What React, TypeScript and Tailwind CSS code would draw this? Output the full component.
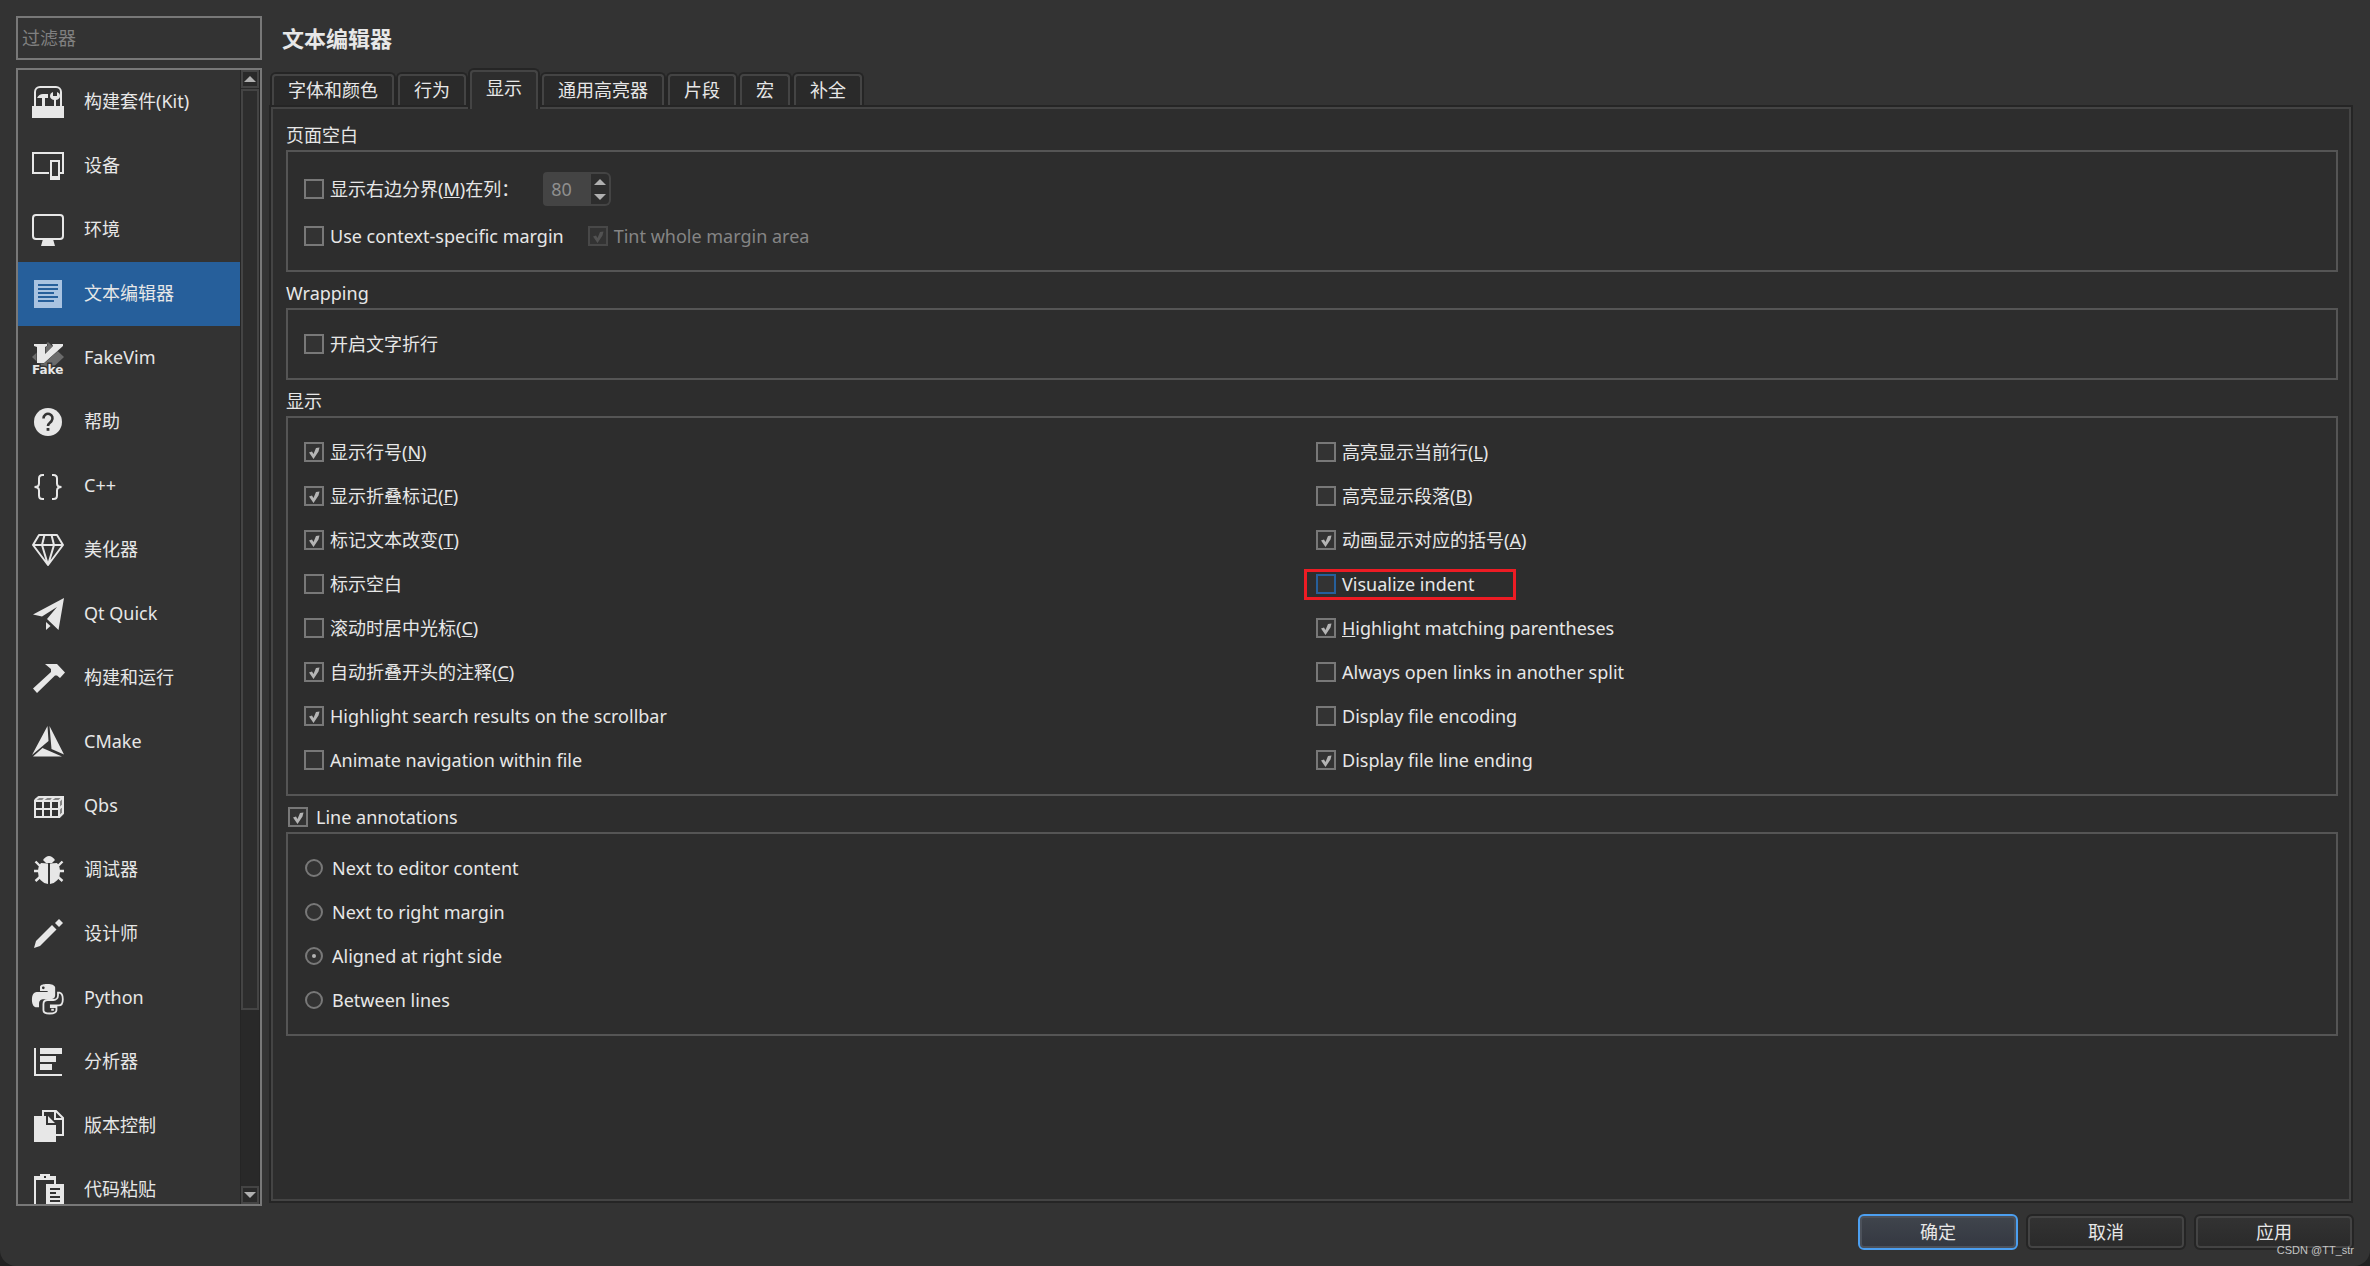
import { useState, type ReactNode } from "react";
import clsx from "clsx";

const Icon = ({ children }: { children: ReactNode }) => (
  <svg viewBox="0 0 32 32" className="size-8 shrink-0 overflow-visible" fill="#e7e7e7" aria-hidden="true">
    {children}
  </svg>
);

const snake =
  "M14.25.18l.9.2.73.26.59.3.45.32.34.34.25.34.16.33.1.3.04.26.02.2-.01.13V8.5l-.05.63-.13.55-.21.46-.26.38-.3.31-.33.25-.35.19-.35.14-.33.1-.3.07-.26.04-.21.02H8.77l-.69.05-.59.14-.5.22-.41.27-.33.32-.27.35-.2.36-.15.37-.1.35-.07.32-.04.27-.02.21v3.06H3.17l-.21-.03-.28-.07-.32-.12-.35-.18-.36-.26-.36-.36-.35-.46-.32-.59-.28-.73-.21-.88-.14-1.05-.05-1.23.06-1.22.16-1.04.24-.87.32-.71.36-.57.4-.44.42-.33.42-.24.4-.16.36-.1.32-.05.24-.01h.16l.06.01h8.16v-.83H6.18l-.01-2.75-.02-.37.05-.34.11-.31.17-.28.25-.26.31-.23.38-.2.44-.18.51-.15.58-.12.64-.1.71-.06.77-.04.84-.02 1.27.05zm-6.3 1.98l-.23.33-.08.41.08.41.23.34.33.22.41.09.41-.09.33-.22.23-.34.08-.41-.08-.41-.23-.33-.33-.22-.41-.09-.41.09z";

const menu = [
  {
    label: "构建套件(Kit)",
    icon: (
      <Icon>
        <path d="M3 20V6a5 5 0 0 1 5-5h16a5 5 0 0 1 5 5v14" fill="none" stroke="#e7e7e7" strokeWidth="2" />
        <path d="M0 20h32v12H0z" />
        <path d="M5 12q2-4 6-4h5v4h-3v9h-3v-9z" />
        <path d="M21 6v4h4V6q3 1 3 4t-4 4v7h-2v-7q-4-1-4-4t3-4z" />
      </Icon>
    ),
  },
  {
    label: "设备",
    icon: (
      <Icon>
        <path d="M17 23H1V3h30v20h-3" fill="none" stroke="#e7e7e7" strokeWidth="2" />
        <path d="M18 10h10v20H18zM20 12v14h6V12z" fillRule="evenodd" />
      </Icon>
    ),
  },
  {
    label: "环境",
    icon: (
      <Icon>
        <rect x="1" y="1" width="30" height="24" rx="3" fill="none" stroke="#e7e7e7" strokeWidth="2" />
        <path d="M11 25h10l2 7H9z" />
      </Icon>
    ),
  },
  {
    label: "文本编辑器",
    icon: (
      <Icon>
        <path d="M2 2h28v28H2z" fill="#a9c3e1" />
        <path d="M6 6h20v2H6zM6 10h20v2H6zM6 14h16v2H6zM6 18h20v2H6zM6 22h16v2H6z" fill="#265f9b" />
      </Icon>
    ),
  },
  {
    label: "FakeVim",
    icon: (
      <Icon>
        <path d="M16 0l16 15-16 15L0 15z" fill="#6b6b6b" />
        <path d="M2 2h13v2l-2 1v7l8-8-1-2h11v2L12 21H5V5L2 4z" stroke="#333" strokeWidth="1" paintOrder="stroke" />
        <text
          x="0"
          y="32"
          fontFamily="DejaVu Sans"
          fontWeight="bold"
          fontSize="12"
          stroke="#333"
          strokeWidth="3"
          paintOrder="stroke"
        >
          Fake
        </text>
      </Icon>
    ),
  },
  {
    label: "帮助",
    icon: (
      <Icon>
        <circle cx="16" cy="16" r="14" />
        <path d="M11.5 12.5a4.5 4.5 0 1 1 8 2.6c-1.3 1.6-3.5 2.2-3.5 4.9" fill="none" stroke="#333" strokeWidth="2.6" />
        <path d="M14.6 22h2.8v2.8h-2.8z" fill="#333" />
      </Icon>
    ),
  },
  {
    label: "C++",
    icon: (
      <Icon>
        <path
          d="M12 5h-1.5Q7 5 7 8.5v5Q7 17 2.5 17 7 17 7 20.5v5Q7 29 10.5 29H12M20 5h1.5Q25 5 25 8.5v5q0 3.5 4.5 3.5-4.5 0-4.5 3.5v5q0 3.5-3.5 3.5H20"
          fill="none"
          stroke="#e7e7e7"
          strokeWidth="2"
        />
      </Icon>
    ),
  },
  {
    label: "美化器",
    icon: (
      <Icon>
        <path
          d="M7 1h18l6 10-15 20L1 11zM1 11h30M12.5 1L10 11l6 20 6-20-2.5-10"
          fill="none"
          stroke="#e7e7e7"
          strokeWidth="2"
          strokeLinejoin="round"
        />
      </Icon>
    ),
  },
  {
    label: "Qt Quick",
    icon: (
      <Icon>
        <path d="M32 0L1 16.5l9 2L25 9 15 21l11.5 11zM14 24l4.5 4L14 32z" />
      </Icon>
    ),
  },
  {
    label: "构建和运行",
    icon: (
      <Icon>
        <path d="M13 2h12l8 8.5-5 5.500-3-2.500h-2L5 31l-4-4.500L19 10V7z" />
      </Icon>
    ),
  },
  {
    label: "CMake",
    icon: (
      <Icon>
        <path d="M15.5 0L0 29l16.5-14zM17.5 0L32 28.5l-12.5-5.5zM1 30.5L10.5 22 30 30.5z" />
      </Icon>
    ),
  },
  {
    label: "Qbs",
    icon: (
      <Icon>
        <path d="M2 10l4-4h26v18l-4 4z" fill="#858585" />
        <path
          d="M3 11h24v16H3zM11 11v16M19 11v16M3 19h24M3 10l4-3h24v16l-4 4M27 11l4-4M11 10l4-3M19 10l4-3M27 19l4-4"
          fill="none"
          stroke="#e7e7e7"
          strokeWidth="2"
        />
        <path d="M4 12h6v6H4zM12 12h6v6h-6zM20 12h6v6h-6zM4 20h6v6H4zM12 20h6v6h-6zM20 20h6v6h-6z" fill="#333" />
      </Icon>
    ),
  },
  {
    label: "调试器",
    icon: (
      <Icon>
        <path d="M11 6q3-4 6-4t6 4l-3 3h-6z" />
        <path d="M16 9.5V30Q6 28 6 18q0-6 3-9zM18 9.5V30q10-2 10-12 0-6-3-9z" />
        <path
          d="M2 17h6M26 17h6M8 12L3.5 7.5M26 12l4.5-4.5M8 23l-4.5 4M26 23l4.5 4"
          stroke="#e7e7e7"
          strokeWidth="2.4"
        />
      </Icon>
    ),
  },
  {
    label: "设计师",
    icon: (
      <Icon>
        <path d="M2 30l2-7L20 7l4.5 4.5L8 28zM27 1l4 4-4 4-4-4z" />
      </Icon>
    ),
  },
  {
    label: "Python",
    icon: (
      <Icon>
        <g transform="translate(0 2) scale(1.3)">
          <path d={snake} />
          <path
            d="M20 6.7h1c2 .4 2.7 2.6 2.7 5 0 2.6-1 4.8-3.2 4.8h-6v1.3h4.3v2.4c0 1.7-2.2 2.5-5.2 2.5s-4.8-1-4.8-2.6v-4.6c0-1.9 1.4-3.2 3.3-3.2h4.4c2 0 3.5-1.5 3.5-3.4zM14.8 19.8h2"
            fill="none"
            stroke="#e7e7e7"
            strokeWidth="1.4"
          />
        </g>
      </Icon>
    ),
  },
  {
    label: "分析器",
    icon: (
      <Icon>
        <path d="M2 2h2v26h26v2H2zM8 2h22v6H8zM8 10h16v6H8zM8 18h12v6H8z" />
      </Icon>
    ),
  },
  {
    label: "版本控制",
    icon: (
      <Icon>
        <path d="M11 6V1h13l7 7v17h-7M23 1v8h8" fill="none" stroke="#e7e7e7" strokeWidth="2" />
        <path d="M2 6h12v9h10v17H2zM16 6l7 7h-7z" />
      </Icon>
    ),
  },
  {
    label: "代码粘贴",
    icon: (
      <Icon>
        <path d="M2 2h6V0h10v2h6v8h-2V6H4v26H2zM12 2v2h2V2z" fillRule="evenodd" />
        <path d="M14 10h18v22H14zM18 14v2h10v-2zM18 18v2h6v-2zM18 22v2h10v-2zM18 26v2h10v-2z" fillRule="evenodd" />
      </Icon>
    ),
  },
];

const tabs = ["字体和颜色", "行为", "显示", "通用高亮器", "片段", "宏", "补全"];

type Option = { label: ReactNode; checked?: boolean; marked?: boolean };

const leftOptions: Option[] = [
  { label: <>显示行号(<u>N</u>)</>, checked: true },
  { label: <>显示折叠标记(<u>F</u>)</>, checked: true },
  { label: <>标记文本改变(<u>T</u>)</>, checked: true },
  { label: "标示空白" },
  { label: <>滚动时居中光标(<u>C</u>)</> },
  { label: <>自动折叠开头的注释(<u>C</u>)</>, checked: true },
  { label: "Highlight search results on the scrollbar", checked: true },
  { label: "Animate navigation within file" },
];

const rightOptions: Option[] = [
  { label: <>高亮显示当前行(<u>L</u>)</> },
  { label: <>高亮显示段落(<u>B</u>)</> },
  { label: <>动画显示对应的括号(<u>A</u>)</>, checked: true },
  { label: "Visualize indent", marked: true },
  { label: <><u>H</u>ighlight matching parentheses</>, checked: true },
  { label: "Always open links in another split" },
  { label: "Display file encoding" },
  { label: "Display file line ending", checked: true },
];

const annotations = ["Next to editor content", "Next to right margin", "Aligned at right side", "Between lines"];

function Check({
  label,
  checked,
  disabled,
  marked,
  gap = "gap-1.5",
}: Option & { disabled?: boolean; gap?: string }) {
  return (
    <label className={clsx("relative flex h-5 w-fit items-center whitespace-nowrap", gap, disabled && "text-[#858585]")}>
      <span className="grid size-5 shrink-0">
        <input
          type="checkbox"
          defaultChecked={checked}
          disabled={disabled}
          className={clsx(
            "peer col-start-1 row-start-1 size-5 appearance-none border-2 bg-[#333]",
            marked ? "border-[#265f9b]" : disabled ? "border-[#484848]" : "border-[#787878]"
          )}
        />
        <svg
          viewBox="0 0 20 20"
          className={clsx(
            "pointer-events-none invisible col-start-1 row-start-1 size-5 peer-checked:visible",
            disabled ? "fill-[#525252]" : "fill-[#b4b4b4]"
          )}
        >
          <path d="M5 10.5l3-1 1.5 2.5L12 6l3.5-.5-1 4-5 7.5z" />
        </svg>
      </span>
      <span>{label}</span>
      {marked && (
        <span className="pointer-events-none absolute -top-[5px] -left-3 h-[31px] w-[212px] border-3 border-[#ed1c24]" />
      )}
    </label>
  );
}

function Group({ title, pad = "py-6", children }: { title: ReactNode; pad?: string; children: ReactNode }) {
  return (
    <section className="mb-[9px]">
      <h2 className="mb-[3px] flex h-6 items-center">{title}</h2>
      <div className={clsx("border-2 border-[#555] px-4", pad)}>{children}</div>
    </section>
  );
}

const Arrow = ({ down }: { down?: boolean }) => (
  <svg viewBox="0 0 12 6" className="h-1.5 w-3" fill="#b0b0b0" aria-hidden="true">
    <path d={down ? "M0 0h12L6 6z" : "M0 6h12L6 0z"} />
  </svg>
);

export default function App() {
  const [page, setPage] = useState("文本编辑器");
  const [tab, setTab] = useState("显示");

  return (
    <div className="h-screen bg-[#222]">
      <div className="flex h-full flex-col rounded-b-2xl bg-[#333] p-4 font-['Noto_Sans','Noto_Sans_CJK_SC',sans-serif] text-[18px] leading-6 text-[#e7e7e7]">
        <div className="mb-2 flex min-h-0 flex-1 gap-2">
          {/* Sidebar */}
          <aside className="flex w-[246px] shrink-0 flex-col gap-2">
            <input
              type="text"
              placeholder="过滤器"
              aria-label="过滤器"
              className="h-11 border-2 border-[#787878] bg-transparent px-1 placeholder:text-[#808080] focus:outline-none"
            />
            <div className="flex min-h-0 flex-1 border-2 border-[#787878]">
              <nav className="min-w-0 flex-1 overflow-y-auto [scrollbar-width:none]">
                {menu.map((item) => (
                  <button
                    key={item.label}
                    onClick={() => setPage(item.label)}
                    className={clsx(
                      "flex h-16 w-full items-center gap-5 pl-3.5 text-left whitespace-nowrap",
                      page === item.label && "bg-[#265f9b]"
                    )}
                  >
                    {item.icon}
                    <span className="pb-0.5">{item.label}</span>
                  </button>
                ))}
              </nav>
              <div className="flex w-5 shrink-0 flex-col border-x border-[#252525] bg-[#292929]">
                <button aria-label="Scroll up" className="flex h-[18px] items-center justify-center border-2 border-[#444]">
                  <Arrow />
                </button>
                <div className="min-h-0 flex-1 py-px">
                  <div className="h-[84%] border-2 border-[#444] bg-[#2d2d2d]" />
                </div>
                <button aria-label="Scroll down" className="flex h-[18px] items-center justify-center border-2 border-[#444]">
                  <Arrow down />
                </button>
              </div>
            </div>
          </aside>

          {/* Content */}
          <main className="flex min-w-0 flex-1 flex-col">
            <h1 className="flex h-11 items-center pl-3 text-[22px] font-bold">文本编辑器</h1>
            <div role="tablist" className="flex h-[47px] items-end">
              {tabs.map((name) => (
                <button
                  key={name}
                  role="tab"
                  aria-selected={tab === name}
                  onClick={() => setTab(name)}
                  className={clsx(
                    "rounded-t-md border-2 border-b-0 border-[#252525]",
                    tab === name ? "z-10 -mb-0.5 h-[41px]" : "mb-0.5 h-[33px]"
                  )}
                >
                  <span
                    className={clsx(
                      "flex h-full justify-center rounded-t-sm border-2 border-b-0 border-[#444] px-3.5",
                      tab === name ? "bg-[#2d2d2d] pt-1" : "bg-[#2a2a2a] pt-0.5"
                    )}
                  >
                    {name}
                  </span>
                </button>
              ))}
            </div>
            <div className="mr-[3px] mb-[5px] ml-px min-h-0 flex-1 overflow-hidden border-2 border-[#444] bg-[#2d2d2d] pt-3.5 pr-[11px] pl-[13px] ring-2 ring-[#252525]">
              <Group title="页面空白" pad="pt-5 pb-6">
                <div className="mb-5 flex h-[34px] items-center">
                  <Check label={<>显示右边分界(<u>M</u>)在列：</>} />
                  <div className="ml-6 flex h-[34px]">
                    <input
                      type="number"
                      defaultValue={80}
                      disabled
                      aria-label="列"
                      className="w-12 [appearance:textfield] rounded-l-sm bg-[#444] pl-2 text-[#8f8f8f]"
                    />
                    <div className="flex w-5 flex-col rounded-r-md border-2 border-l-0 border-[#444]">
                      <button aria-label="Increase" className="flex flex-1 items-center justify-center">
                        <Arrow />
                      </button>
                      <button aria-label="Decrease" className="flex flex-1 items-center justify-center">
                        <Arrow down />
                      </button>
                    </div>
                  </div>
                </div>
                <div className="flex gap-6">
                  <Check label="Use context-specific margin" />
                  <Check label="Tint whole margin area" checked disabled />
                </div>
              </Group>

              <Group title="Wrapping">
                <Check label="开启文字折行" />
              </Group>

              <Group title="显示">
                <div className="grid grid-cols-2 gap-x-2">
                  {[leftOptions, rightOptions].map((column, i) => (
                    <div key={i} className="flex flex-col gap-6">
                      {column.map((option, j) => (
                        <Check key={j} {...option} />
                      ))}
                    </div>
                  ))}
                </div>
              </Group>

              <Group
                title={
                  <span className="pl-0.5">
                    <Check label="Line annotations" checked gap="gap-2" />
                  </span>
                }
              >
                <div className="flex flex-col gap-6">
                  {annotations.map((name) => (
                    <label key={name} className="flex h-5 w-fit items-center gap-2">
                      <span className="grid size-5 place-items-center">
                        <input
                          type="radio"
                          name="annotations"
                          defaultChecked={name === "Aligned at right side"}
                          className="peer col-start-1 row-start-1 size-[18px] appearance-none rounded-full border-2 border-[#787878] bg-[#333]"
                        />
                        <span className="pointer-events-none invisible col-start-1 row-start-1 size-1 rounded-full bg-[#b4b4b4] peer-checked:visible" />
                      </span>
                      <span>{name}</span>
                    </label>
                  ))}
                </div>
              </Group>
            </div>
          </main>
        </div>

        {/* Footer */}
        <footer className="relative flex justify-end gap-2">
          <button className="h-9 w-40 rounded-md border-2 border-[#4c9ff0] bg-linear-to-b from-[#40454d] to-[#343841] inset-ring-2 inset-ring-[#4c515a]">
            确定
          </button>
          {["取消", "应用"].map((name) => (
            <button
              key={name}
              className="h-9 w-40 rounded-md border-2 border-[#252525] bg-linear-to-b from-[#333] to-[#2a2a2a] inset-ring-2 inset-ring-[#444]"
            >
              {name}
            </button>
          ))}
          <span className="pointer-events-none absolute right-0 -bottom-2 font-['Liberation_Sans',sans-serif] text-[11px] leading-4 text-[#c4c4c4]">
            CSDN @TT_str
          </span>
        </footer>
      </div>
    </div>
  );
}
